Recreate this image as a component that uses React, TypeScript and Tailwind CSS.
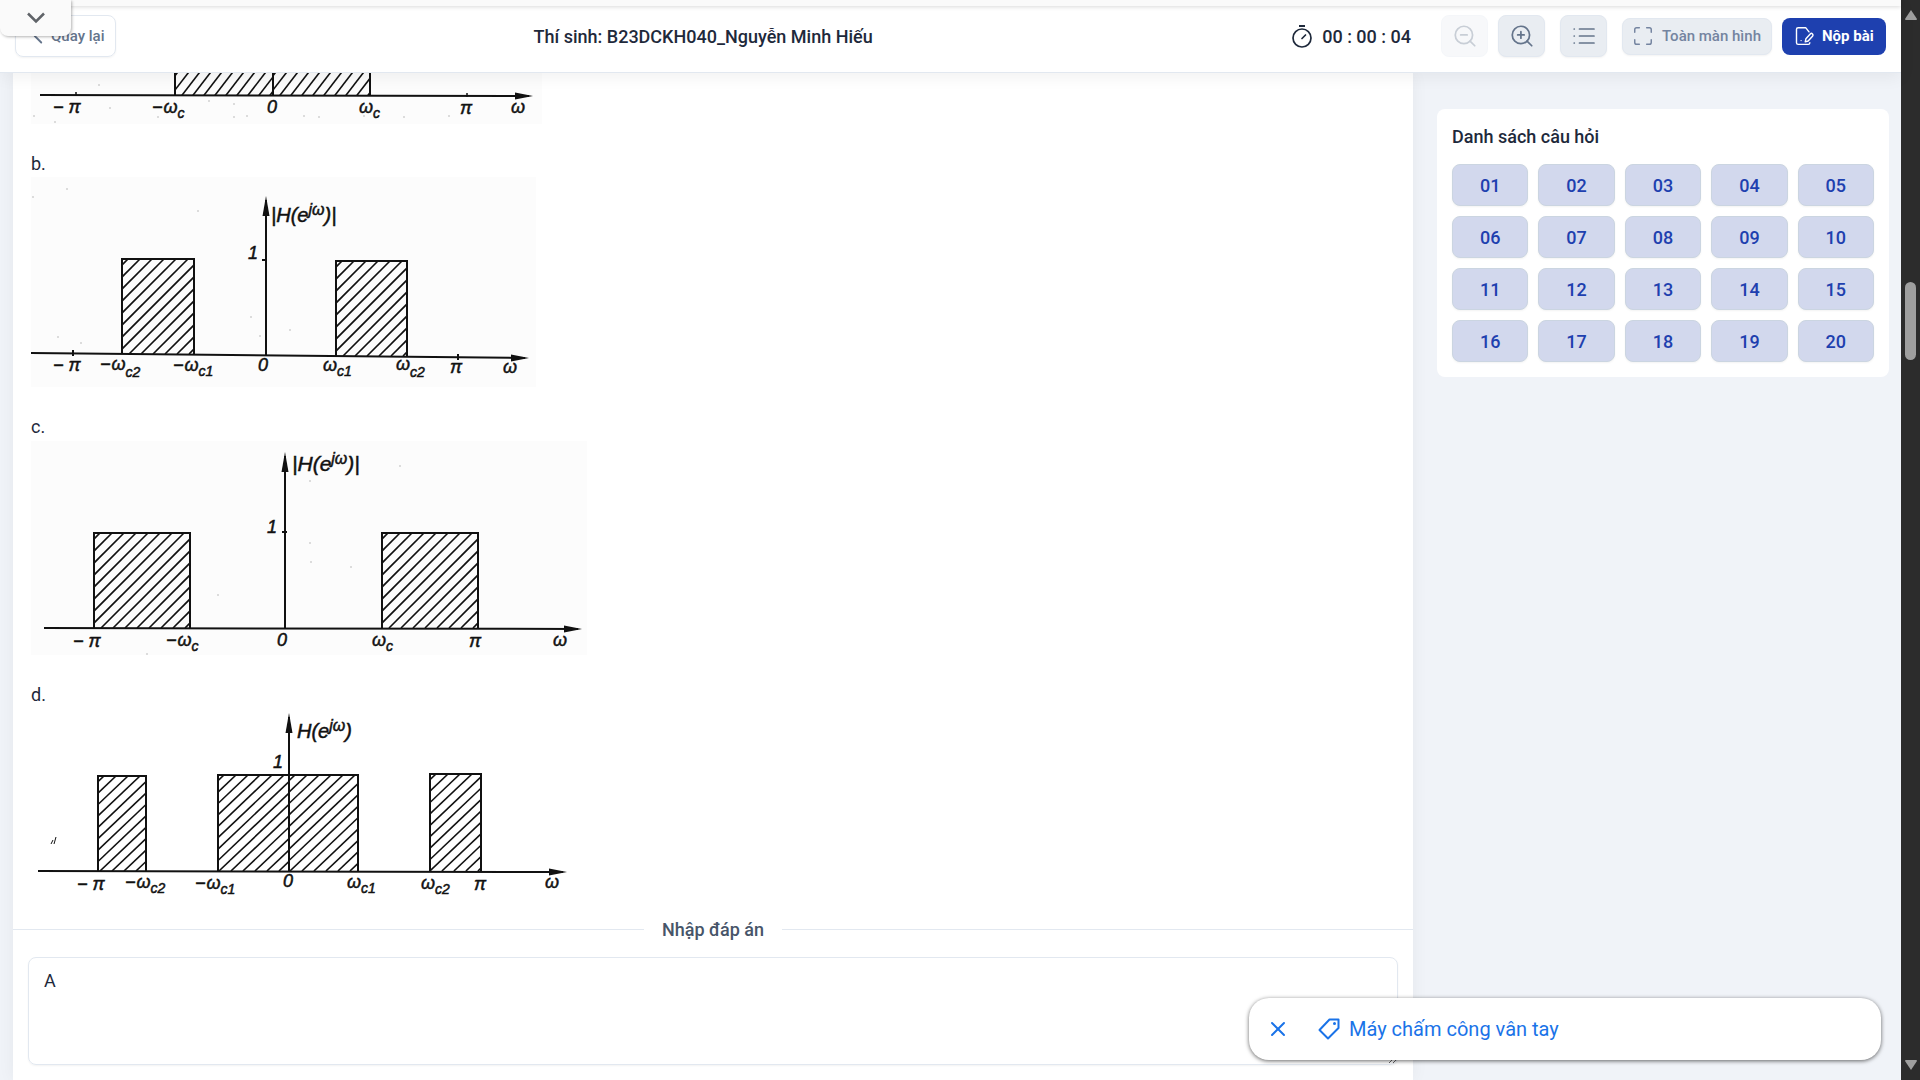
import React from "react";
import { ChevronLeft, ZoomIn, ZoomOut, Maximize, X } from "lucide-react";

type Point = [number, number];

/* Parallel diagonal strokes clipped to one pass band. */
function Band({ x1, x2, top, bottom, id, gap = 12, slope = 1 }: { x1: number; x2: number; top: number; bottom: number; id: string; gap?: number; slope?: number }) {
  const h = bottom - top;
  const run = h / slope;
  const lines: number[] = [];
  for (let s = x1 - run + gap / 2; s < x2; s += gap) lines.push(s);
  return (
    <g>
      <clipPath id={id}>
        <rect x={x1} y={top} width={x2 - x1} height={h} />
      </clipPath>
      <g clipPath={`url(#${id})`} strokeWidth="1.6">
        {lines.map((s) => (
          <line key={s} x1={s} y1={bottom} x2={s + run} y2={top} />
        ))}
      </g>
      <path d={`M${x1} ${bottom}V${top}H${x2}V${bottom}`} fill="none" strokeWidth="2" />
    </g>
  );
}

function Omega({ x, y, sub, neg, drop = 5 }: { x: number; y: number; sub?: string; neg?: boolean; drop?: number }) {
  return (
    <text x={x} y={y}>
      {neg ? "−" : ""}
      {neg ? <tspan dx="1">ω</tspan> : "ω"}
      {sub ? (
        <tspan dy={drop} fontSize="14">
          {sub}
        </tspan>
      ) : null}
    </text>
  );
}

function Response({ x, y, bars, size = 20 }: { x: number; y: number; bars?: boolean; size?: number }) {
  return (
    <text x={x} y={y} fontSize={size}>
      {bars ? "|" : ""}H(e
      <tspan dy="-7" fontSize="16">
        jω
      </tspan>
      <tspan dy="7">){bars ? "|" : ""}</tspan>
    </text>
  );
}

function Axis({ from, to }: { from: Point; to: Point }) {
  return (
    <g>
      <line x1={from[0]} y1={from[1]} x2={to[0] - 4} y2={to[1]} strokeWidth="2" />
      <path d={`M${to[0]} ${to[1]}l-18 -3.500v7z`} stroke="none" />
    </g>
  );
}

function Rise({ x, top, bottom }: { x: number; top: number; bottom: number }) {
  return (
    <g>
      <line x1={x} y1={top + 4} x2={x} y2={bottom} strokeWidth="2" />
      <path d={`M${x} ${top}l3.500 20h-7z`} stroke="none" />
    </g>
  );
}

/* Faint scanner dust. */
function Specks({ at }: { at: Point[] }) {
  return (
    <g fill="#b5b5b5" stroke="none">
      {at.map(([x, y]) => (
        <circle key={`${x}-${y}`} cx={x} cy={y} r="0.8" />
      ))}
    </g>
  );
}

function Plot({ label, width, height, x, y, shade, children }: { label: string; width: number; height: number; x: number; y: number; shade?: boolean; children: React.ReactNode }) {
  return (
    <svg
      role="img"
      aria-label={label}
      width={width}
      height={height}
      viewBox={`${x} ${y} ${width} ${height}`}
      className={shade ? "block bg-[#fcfcfc]" : "block"}
      fontFamily="'Liberation Sans', sans-serif"
      fontStyle="italic"
      stroke="#111"
      fill="#111"
      fontSize="18"
    >
      <style>{"text{stroke:#111;stroke-width:.5px}"}</style>
      {children}
    </svg>
  );
}

function PlotA() {
  return (
    <Plot label="Đáp án a" width={511} height={51} x={31} y={73} shade>
      <Specks at={[[34, 116], [55, 122], [99, 85], [110, 108], [158, 117], [209, 101], [234, 104], [234, 117], [247, 116], [304, 116], [319, 117], [364, 116], [404, 117], [449, 116]]} />
      <Band id="a1" x1={175} x2={273} top={40} bottom={96} slope={1.3} gap={11} />
      <Band id="a2" x1={273} x2={370} top={40} bottom={96} slope={1.3} gap={11} />
      <Axis from={[40, 95]} to={[533, 96]} />
      <path d="M76 92v4M467 93v4" strokeWidth="1.5" />
      <text x="53" y="113">− π</text>
      <Omega x={152} y={113} sub="c" neg />
      <text x="267" y="113">0</text>
      <Omega x={359} y={113} sub="c" />
      <text x="460" y="114">π</text>
      <Omega x={511} y={113} />
    </Plot>
  );
}

function PlotB() {
  return (
    <Plot label="Đáp án b" width={505} height={210} x={31} y={177} shade>
      <Specks at={[[33, 197], [67, 189], [58, 337], [81, 343], [198, 211], [251, 317], [260, 336], [290, 330]]} />
      <Band id="b1" x1={122} x2={194} top={259} bottom={354} />
      <Band id="b2" x1={336} x2={407} top={261} bottom={356} />
      <Axis from={[31, 353]} to={[529, 358]} />
      <Rise x={266} top={196} bottom={355} />
      <path d="M262 260h4M73 350v6M458 354v6" strokeWidth="2" />
      <text x="248" y="259">1</text>
      <Response x={271} y={222} size={20} bars />
      <text x="53" y="371">− π</text>
      <Omega x={100} y={370} sub="c2" neg drop={7} />
      <Omega x={173} y={371} sub="c1" neg />
      <text x="258" y="371">0</text>
      <Omega x={323} y={371} sub="c1" />
      <Omega x={396} y={370} sub="c2" drop={7} />
      <text x="450" y="373">π</text>
      <Omega x={503} y={373} />
    </Plot>
  );
}

function PlotC() {
  return (
    <Plot label="Đáp án c" width={556} height={214} x={31} y={441} shade>
      <Specks at={[[147, 654], [218, 595], [310, 481], [310, 543], [311, 562], [351, 567], [400, 466]]} />
      <Band id="c1" x1={94} x2={190} top={533} bottom={628} />
      <Band id="c2" x1={382} x2={478} top={533} bottom={628} />
      <Axis from={[44, 628]} to={[582, 629]} />
      <Rise x={285} top={452} bottom={628} />
      <path d="M282 532h5" strokeWidth="2" />
      <text x="267" y="533">1</text>
      <Response x={292} y={471} size={21} bars />
      <text x="73" y="647">− π</text>
      <Omega x={166} y={646} sub="c" neg />
      <text x="277" y="646">0</text>
      <Omega x={372} y={646} sub="c" />
      <text x="469" y="647">π</text>
      <Omega x={553} y={646} />
    </Plot>
  );
}

function PlotD() {
  return (
    <Plot label="Đáp án d" width={556} height={193} x={31} y={709}>
      <Band id="d1" x1={98} x2={146} top={776} bottom={871} slope={0.95} />
      <Band id="d2" x1={218} x2={289} top={775} bottom={871} slope={0.95} />
      <Band id="d3" x1={289} x2={358} top={775} bottom={871} slope={0.95} />
      <Band id="d4" x1={430} x2={481} top={774} bottom={871} slope={0.95} />
      <Axis from={[38, 871]} to={[567, 872]} />
      <Rise x={289} top={713} bottom={871} />
      <path d="M51 844l2 -4M54 844l2 -7" strokeWidth="1" />
      <text x="273" y="768">1</text>
      <Response x={297} y={738} />
      <text x="77" y="890">− π</text>
      <Omega x={125} y={888} sub="c2" neg />
      <Omega x={195} y={889} sub="c1" neg />
      <text x="283" y="887">0</text>
      <Omega x={347} y={888} sub="c1" />
      <Omega x={421} y={889} sub="c2" />
      <text x="474" y="890">π</text>
      <Omega x={545} y={888} />
    </Plot>
  );
}

function SubmitIcon() {
  return (
    <svg width="20" height="20" viewBox="0 0 24 24" fill="none" stroke="currentColor" strokeWidth="1.7" strokeLinecap="round" strokeLinejoin="round" aria-hidden="true">
      <path d="M18 7l-4-5H5a2 2 0 0 0-2 2v16a2 2 0 0 0 2 2h12a2 2 0 0 0 2-2" />
      <path d="M19.500 9.500a1.900 1.900 0 0 1 2.700 2.700L17 18l-3.500 1 .8-3.800z" />
      <path d="M8.500 17.500h.01" />
    </svg>
  );
}

function TimerIcon() {
  return (
    <svg width="24" height="24" viewBox="0 0 24 24" fill="none" stroke="currentColor" strokeWidth="1.7" aria-hidden="true">
      <path d="M9 2h6" strokeWidth="2" />
      <circle cx="12" cy="14" r="9" />
      <path d="M12 14.500l3.500-3.500" strokeLinecap="round" />
    </svg>
  );
}

function ListIcon() {
  return (
    <svg width="24" height="24" viewBox="0 0 24 24" fill="none" stroke="currentColor" strokeWidth="1.7" strokeLinecap="round" aria-hidden="true">
      <path d="M7.500 5H22M7.500 12H22M7.500 19H22M2.200 5h.1M2.200 12h.1M2.200 19h.1" />
    </svg>
  );
}

function TagIcon() {
  return (
    <svg width="24" height="24" viewBox="0 0 24 24" fill="none" stroke="currentColor" strokeWidth="2" strokeLinejoin="round" aria-hidden="true">
      <path d="M12.500 2.500H21.500v8.500L11 21.500 2.500 13z" />
      <circle cx="17.500" cy="6.500" r="1.500" fill="currentColor" stroke="none" />
    </svg>
  );
}

const questions = Array.from({ length: 20 }, (_, i) => String(i + 1).padStart(2, "0"));

export default function App() {
  return (
    <div className="flex h-screen overflow-hidden bg-[#f0f3f8] font-[Roboto,sans-serif] text-[#1e293b]">
      <div className="relative flex min-w-0 flex-1 flex-col">
        <header className="relative z-10 flex h-[73px] shrink-0 items-center border-b border-[#e2e8f0] bg-white px-[15px] shadow-[0_4px_16px_rgba(0,0,0,0.06)]">
          <button className="flex h-[42px] w-[101px] items-center rounded-lg border border-[#e2e8f0] pl-[9px] text-[15px] font-medium text-[#64748b] shadow-xs">
            <ChevronLeft size={26} strokeWidth={1.7} />
            Quay lại
          </button>
          <h1 className="flex-1 text-center text-[18px] font-medium">Thí sinh: B23DCKH040_Nguyễn Minh Hiếu</h1>
          <div className="flex items-center">
            <TimerIcon />
            <span className="mr-[30px] ml-2 text-[18px] font-medium">00 : 00 : 04</span>
            <button aria-label="Thu nhỏ" disabled className="mr-[10px] flex h-[42px] w-[47px] items-center justify-center rounded-lg border border-[#e2e8f0] bg-[#e9edf2] text-[#64748b] opacity-35">
              <ZoomOut size={26} strokeWidth={1.6} />
            </button>
            <button aria-label="Phóng to" className="mr-[15px] flex h-[42px] w-[47px] items-center justify-center rounded-lg border border-[#e2e8f0] bg-[#e9edf2] text-[#64748b] shadow-xs">
              <ZoomIn size={26} strokeWidth={1.6} />
            </button>
            <button aria-label="Danh sách" className="mr-[15px] flex h-[42px] w-[47px] items-center justify-center rounded-lg border border-[#e2e8f0] bg-[#e9edf2] text-[#64748b] shadow-xs">
              <ListIcon />
            </button>
            <button className="mr-[10px] flex h-[37px] w-[150px] items-center gap-2 rounded-lg border border-[#e2e8f0] bg-[#e9edf2] pl-[9px] text-[15px] font-medium whitespace-nowrap text-[#7484a0] shadow-xs">
              <Maximize size={22} strokeWidth={1.6} />
              Toàn màn hình
            </button>
            <button className="flex h-[37px] w-[104px] items-center gap-2 rounded-lg bg-[#1e40af] pl-3 text-[15px] font-bold whitespace-nowrap text-white">
              <SubmitIcon />
              Nộp bài
            </button>
          </div>
        </header>

        <div className="absolute inset-x-0 top-0 z-20 h-[6px] bg-[#fafafa] shadow-[0_1px_4px_rgba(0,0,0,0.15)]" />
        <button aria-label="Mở thanh công cụ" className="absolute top-0 left-0 z-30 flex h-9 w-[71px] items-center justify-center rounded-b-lg bg-[#fafafa] text-[#5f6368] shadow-[1px_1px_3px_rgba(0,0,0,0.3)]">
          <svg width="20" height="12" viewBox="0 0 20 12" fill="none" stroke="currentColor" strokeWidth="2.5" aria-hidden="true">
            <path d="M2 1.500l8 8 8-8" />
          </svg>
        </button>

        <div className="flex min-h-0 flex-1 pr-3 pl-[13px]">
          <main className="min-w-0 flex-1 bg-white text-[18px] shadow-[0_0_16px_rgba(0,0,0,0.05)]">
            <div className="flex flex-col pl-[18px]">
              <PlotA />
              <p className="mt-[26px] leading-[27px]">b.</p>
              <PlotB />
              <p className="mt-[26px] leading-[28px]">c.</p>
              <PlotC />
              <p className="mt-[26px] leading-[28px]">d.</p>
              <PlotD />
            </div>
            <div className="mt-[14px] flex items-center gap-[18px] text-[#475569]">
              <span className="h-px flex-1 bg-[#e2e8f0]" />
              <label htmlFor="answer" className="font-medium">Nhập đáp án</label>
              <span className="h-px flex-1 bg-[#e2e8f0]" />
            </div>
            <div className="mt-[14px] px-[15px]">
              <textarea id="answer" defaultValue="A" className="block h-[108px] w-full rounded-lg border border-[#e2e8f0] px-[15px] py-[9px] leading-[27px] shadow-xs outline-none" />
            </div>
          </main>
          <aside className="ml-6 w-[452px] shrink-0 pt-9">
            <section className="rounded-lg bg-white p-[15px]">
              <h2 className="mb-[15px] text-[18px] leading-[25px] font-medium">Danh sách câu hỏi</h2>
              <div className="grid grid-cols-5 gap-[10px]">
                {questions.map((q) => (
                  <button key={q} className="h-[42px] rounded-lg border border-[#cbd5e1] bg-[#d2d8ed] text-[18px] font-medium text-[#1e40af] shadow-xs">
                    {q}
                  </button>
                ))}
              </div>
            </section>
          </aside>
        </div>

        <div className="absolute right-5 bottom-5 z-40 flex h-[62px] w-[632px] items-center rounded-[20px] bg-white pl-[17px] text-[#1a73e8] shadow-[0_1px_4px_rgba(0,0,0,0.6)]">
          <button aria-label="Đóng">
            <X size={24} />
          </button>
          <a href="#" className="ml-[27px] flex items-center gap-2 text-[20px]">
            <TagIcon />
            Máy chấm công vân tay
          </a>
        </div>
      </div>

      <div aria-hidden="true" className="flex w-[19px] shrink-0 flex-col items-center bg-[#2c2c2c] py-2.5">
        <svg width="12" height="10" viewBox="0 0 12 10" fill="#9f9f9f"><path d="M6 0l6 9q0 1-1 1H1q-1 0-1-1z" /></svg>
        <div className="mt-[262px] h-[78px] w-[11px] rounded-full bg-[#9f9f9f]" />
        <svg className="mt-auto" width="12" height="10" viewBox="0 0 12 10" fill="#9f9f9f"><path d="M6 10L0 1q0-1 1-1h10q1 0 1 1z" /></svg>
      </div>
    </div>
  );
}
